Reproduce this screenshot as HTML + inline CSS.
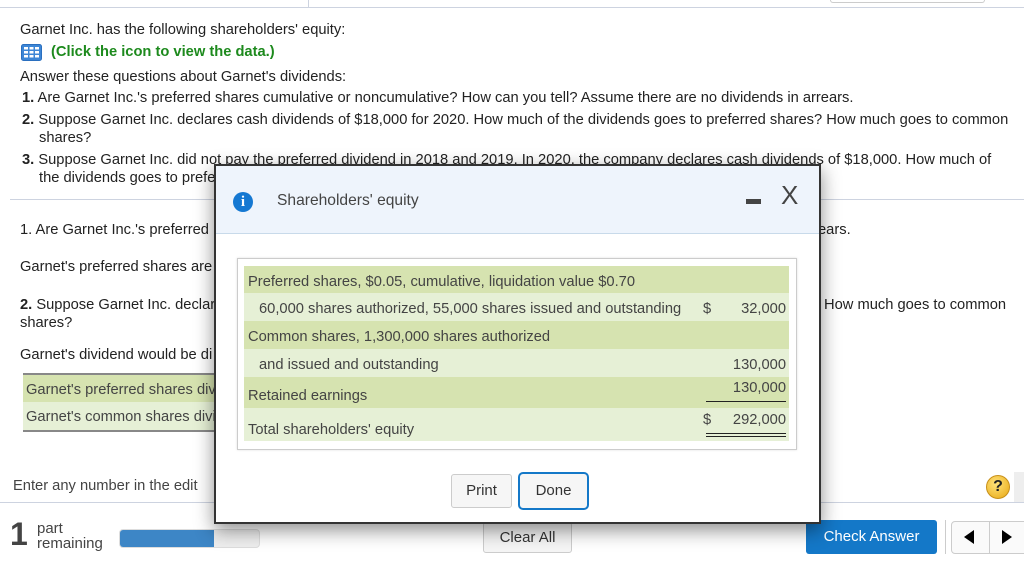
<!DOCTYPE html>
<html><head><meta charset="utf-8"><style>
*{margin:0;padding:0;box-sizing:border-box}
body{width:1024px;height:571px;overflow:hidden;background:#fff;font-family:"Liberation Sans",Arial,sans-serif;color:#222;position:relative;font-size:14.7px}
.a{position:absolute;white-space:nowrap}
.b{font-weight:bold}
.g{color:#444}
</style></head><body>
<div class="a" style="left:0;top:7px;width:1024px;height:1px;background:#cdd3e0"></div>
<div class="a" style="left:308px;top:0;width:1px;height:8px;background:#cdd3e0"></div>
<div class="a" style="left:830px;top:0;width:155px;height:3px;border:1px solid #ccc;border-top:none;border-radius:0 0 4px 4px"></div>
<div class="a" style="left:20px;top:22px">Garnet Inc. has the following shareholders' equity:</div>
<svg class="a" style="left:21px;top:44px" width="21" height="17" viewBox="0 0 21 17"><rect x="0.5" y="0.5" width="20" height="16" rx="2" fill="#3d86d6" stroke="#2a6fbf"/><g fill="#fff"><rect x="3" y="3" width="4" height="2.5"/><rect x="8.5" y="3" width="4" height="2.5"/><rect x="14" y="3" width="4" height="2.5"/><rect x="3" y="7" width="4" height="2.5"/><rect x="8.5" y="7" width="4" height="2.5"/><rect x="14" y="7" width="4" height="2.5"/><rect x="3" y="11" width="4" height="2.5"/><rect x="8.5" y="11" width="4" height="2.5"/><rect x="14" y="11" width="4" height="2.5"/></g></svg>
<div class="a b" style="left:51px;top:44px;color:#1d8a1d">(Click the icon to view the data.)</div>
<div class="a" style="left:20px;top:69px">Answer these questions about Garnet's dividends:</div>
<div class="a" style="left:22px;top:90px"><b>1.</b> Are Garnet Inc.'s preferred shares cumulative or noncumulative? How can you tell? Assume there are no dividends in arrears.</div>
<div class="a" style="left:22px;top:112px"><b>2.</b> Suppose Garnet Inc. declares cash dividends of $18,000 for 2020. How much of the dividends goes to preferred shares? How much goes to common</div>
<div class="a" style="left:39px;top:130px">shares?</div>
<div class="a" style="left:22px;top:152px"><b>3.</b> Suppose Garnet Inc. did not pay the preferred dividend in 2018 and 2019. In 2020, the company declares cash dividends of $18,000. How much of</div>
<div class="a" style="left:39px;top:170px">the dividends goes to prefe</div>
<div class="a" style="left:10px;top:199px;width:1014px;height:1px;background:#cdd3e0"></div>
<div class="a" style="left:20px;top:222px">1. Are Garnet Inc.'s preferred</div>
<div class="a" style="left:818px;top:222px">ears.</div>
<div class="a" style="left:20px;top:259px">Garnet's preferred shares are</div>
<div class="a" style="left:20px;top:297px"><b>2.</b> Suppose Garnet Inc. declar</div>
<div class="a" style="left:20px;top:315px">shares?</div>
<div class="a" style="left:824px;top:297px">How much goes to common</div>
<div class="a" style="left:20px;top:347px">Garnet's dividend would be di</div>
<div class="a" style="left:23px;top:373px;width:200px;height:2px;background:#888"></div>
<div class="a g" style="left:23px;top:375px;width:200px;height:27px;background:#d6e3b0;padding:7px 0 0 3px">Garnet's preferred shares div</div>
<div class="a g" style="left:23px;top:402px;width:200px;height:28px;background:#e6f0d6;padding:7px 0 0 3px">Garnet's common shares divi</div>
<div class="a" style="left:23px;top:430px;width:200px;height:2px;background:#888"></div>
<div class="a g" style="left:13px;top:478px">Enter any number in the edit</div>
<div class="a" style="left:0;top:502px;width:1024px;height:1px;background:#cdd3e0"></div>
<div class="a" style="left:986px;top:475px;width:24px;height:24px;border-radius:50%;background:radial-gradient(circle at 40% 35%,#ffe27a,#e8a812);border:1px solid #c8901a;text-align:center;font-weight:bold;font-size:16px;line-height:22px;color:#222">?</div>
<div class="a" style="left:1014px;top:472px;width:10px;height:30px;background:#eee"></div>
<div class="a b" style="left:10px;top:516px;font-size:32px;color:#444;line-height:36px">1</div>
<div class="a" style="left:37px;top:521px;font-size:15px;line-height:15px;color:#444">part<br>remaining</div>
<div class="a" style="left:119px;top:529px;width:141px;height:19px;border:1px solid #ddd;border-radius:4px;background:#eee;overflow:hidden"><div style="width:94px;height:100%;background:#3d86c6"></div></div>
<div class="a" style="left:483px;top:522px;width:89px;height:31px;border:1px solid #ccc;border-radius:3px;background:#f5f5f5;text-align:center;line-height:29px;font-size:15px;color:#333">Clear All</div>
<div class="a" style="left:806px;top:520px;width:131px;height:34px;background:#1478c8;border-radius:3px;color:#fff;text-align:center;line-height:34px;font-size:15px">Check Answer</div>
<div class="a" style="left:945px;top:520px;width:1px;height:34px;background:#ccc"></div>
<div class="a" style="left:951px;top:521px;width:80px;height:33px;border:1px solid #ccc;border-radius:4px;background:#fafafa"></div>
<div class="a" style="left:989px;top:521px;width:1px;height:33px;background:#ccc"></div>
<div class="a" style="left:964px;top:530px;width:0;height:0;border-top:7px solid transparent;border-bottom:7px solid transparent;border-right:10px solid #000"></div>
<div class="a" style="left:1002px;top:530px;width:0;height:0;border-top:7px solid transparent;border-bottom:7px solid transparent;border-left:10px solid #000"></div>

<div class="a" style="left:214px;top:164px;width:607px;height:360px;background:#fff;border:2px solid #333;box-shadow:0 6px 18px rgba(0,0,0,.45)">
 <div style="position:absolute;left:0;top:0;width:603px;height:68px;background:#eef4fc;border-bottom:1px solid #c8daea"></div>
 <div style="position:absolute;left:17px;top:26px;width:20px;height:20px;border-radius:50%;background:#1578d2;color:#fff;text-align:center;font:bold 15px/20px 'Liberation Serif',serif">i</div>
 <div style="position:absolute;left:61px;top:26px;color:#444;font-size:15.6px">Shareholders' equity</div>
 <div style="position:absolute;left:530px;top:33px;width:15px;height:5px;background:#444"></div>
 <div style="position:absolute;left:565px;top:14px;font-size:26px;color:#444">X</div>
 <div style="position:absolute;left:21px;top:92px;width:560px;height:192px;border:1px solid #ccc;box-shadow:0 0 2px #ddd"></div>
 <div style="position:absolute;left:28px;top:100px;width:545px;color:#444;font-size:14.7px">
  <div style="height:27px;background:#d6e3b0;padding:8px 0 0 4px">Preferred shares, $0.05, cumulative, liquidation value $0.70</div>
  <div style="height:28px;background:#e6f0d6;padding:8px 0 0 15px;position:relative">60,000 shares authorized, 55,000 shares issued and outstanding<span style="position:absolute;left:459px">$</span><span style="position:absolute;right:3px">32,000</span></div>
  <div style="height:28px;background:#d6e3b0;padding:8px 0 0 4px">Common shares, 1,300,000 shares authorized</div>
  <div style="height:28px;background:#e6f0d6;padding:8px 0 0 15px;position:relative">and issued and outstanding<span style="position:absolute;right:3px">130,000</span></div>
  <div style="height:31px;background:#d6e3b0;padding:11px 0 0 4px;position:relative">Retained earnings<span style="position:absolute;right:3px;top:3px">130,000</span><span style="position:absolute;right:3px;top:24px;width:80px;height:1px;background:#222"></span></div>
  <div style="height:33px;background:#e6f0d6;padding:14px 0 0 4px;position:relative">Total shareholders' equity<span style="position:absolute;left:459px;top:4px">$</span><span style="position:absolute;right:3px;top:4px">292,000</span><span style="position:absolute;right:3px;top:25px;width:80px;height:4px;border-top:1px solid #222;border-bottom:1px solid #222"></span></div>
 </div>
 <div style="position:absolute;left:235px;top:308px;width:61px;height:34px;border:1px solid #ccc;border-radius:3px;background:#f6f6f6;text-align:center;line-height:32px;font-size:15px;color:#333">Print</div>
 <div style="position:absolute;left:302px;top:306px;width:71px;height:38px;border:2px solid #1478c8;border-radius:5px;background:#f6f6f6;text-align:center;line-height:34px;font-size:15px;color:#333">Done</div>
</div>
</body></html>
